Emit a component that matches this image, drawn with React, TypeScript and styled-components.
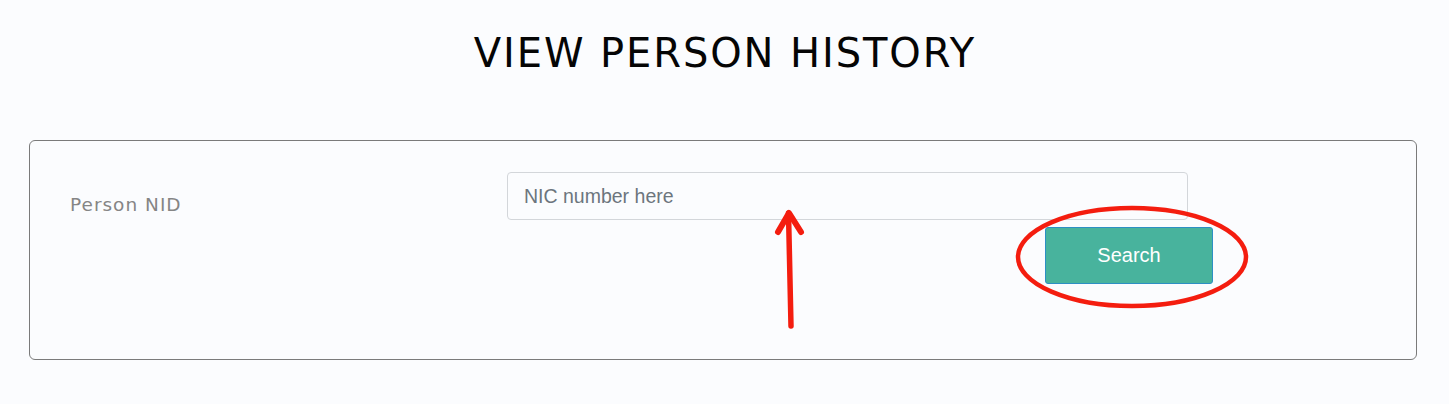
import React from "react";
import styled, { createGlobalStyle } from "styled-components";

const Global = createGlobalStyle`
  html, body { margin: 0; padding: 0; background: #fbfcfe; }
  body { font-family: "Liberation Sans", Arial, sans-serif; }
  * { box-sizing: border-box; }
`;

const Page = styled.div`
  position: relative;
  width: 1449px;
  height: 404px;
  padding: 29px 32px 0 29px;
  background: #fbfcfe;
`;

const Title = styled.h1`
  margin: 0;
  text-align: center;
  font-family: "DejaVu Sans", "Open Sans", sans-serif;
  font-weight: 400;
  font-size: 40px;
  line-height: 48px;
  color: #050505;
  padding-left: 4px;
  letter-spacing: 1.9px;
`;

const Card = styled.div`
  margin-top: 63px;
  height: 220px;
  border: 1.5px solid #7a7a7a;
  border-radius: 6px;
  padding: 31px 0 0 40px;
  display: grid;
  grid-template-columns: 437px 706px;
  grid-template-rows: auto auto;
  align-content: start;
  row-gap: 7px;
`;

const Label = styled.label`
  font-family: "DejaVu Sans", sans-serif;
  font-size: 18.5px;
  letter-spacing: 1px;
  color: #858585;
  padding-top: 22px;
  grid-row: 1 / span 2;
`;

const Input = styled.input`
  width: 681px;
  height: 48px;
  border: 1px solid #d3d6da;
  border-radius: 4px;
  background: #fbfcfe;
  padding: 0 16px;
  font-family: "Liberation Sans", Arial, sans-serif;
  font-size: 19.5px;
  color: #495057;
  outline: none;
  &::placeholder { color: #6c757d; }
`;

const Button = styled.button`
  justify-self: end;
  width: 168px;
  height: 57px;
  background: #48b39d;
  border: 1px solid #2d8fc4;
  border-radius: 3px;
  color: #ffffff;
  font-family: "Liberation Sans", Arial, sans-serif;
  font-size: 20px;
  cursor: pointer;
`;

const Overlay = styled.svg`
  position: absolute;
  left: 0;
  top: 0;
  pointer-events: none;
`;

export default function App() {
  return (
    <>
      <Global />
      <Page>
        <Title>VIEW PERSON HISTORY</Title>
        <Card>
          <Label>Person NID</Label>
          <Input placeholder="NIC number here" />
          <Button>Search</Button>
        </Card>
        <Overlay width="1449" height="404" viewBox="0 0 1449 404">
          <ellipse cx="1132" cy="257" rx="114" ry="49" fill="none" stroke="#f41d0f" strokeWidth="4.5" />
          <path d="M788.5 213 L791 326" stroke="#f41d0f" strokeWidth="5.5" strokeLinecap="round" fill="none" />
          <path d="M778 232 L789 213 L801 232" stroke="#f41d0f" strokeWidth="6" strokeLinecap="round" strokeLinejoin="round" fill="none" />
        </Overlay>
      </Page>
    </>
  );
}
